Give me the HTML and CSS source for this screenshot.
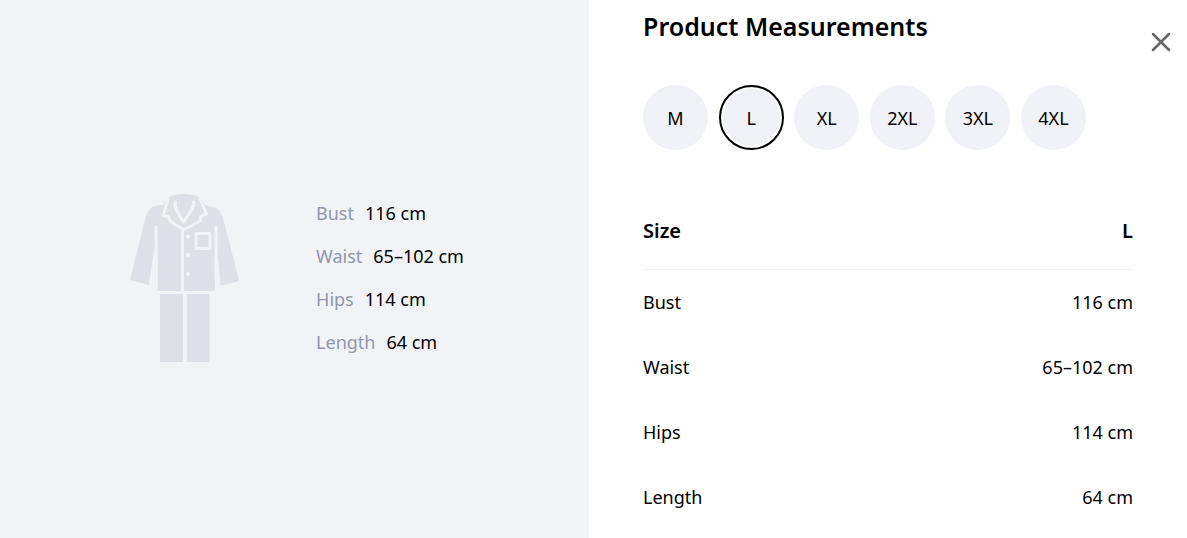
FILE: index.html
```html
<!DOCTYPE html>
<html lang="en">
<head>
<meta charset="utf-8">
<meta name="viewport" content="width=device-width, initial-scale=1">
<title>Product Measurements</title>
<link rel="stylesheet" href="styles.css">
</head>
<body>
<main class="dialog">
  <section class="preview" aria-label="Garment overview">
    <svg class="garment" viewBox="10 8 110 170" aria-hidden="true">
      <g class="garment-fill">
        <path d="M48 13C52 10 57 9 63 9s13 1 18 4l4 7 8 2c5 1 8 5 10 11l16 63-19 5L95 56v50H37.500V56L29 100 10 95 25 35c2-8 5-13 10-14l8-1z"/>
        <path d="M40 109h23v68H40zM67 109h22.500v68H67z"/>
      </g>
      <g class="garment-line">
        <path d="M36 42v52M96 42v52M62.500 46v61"/>
        <path d="M48 15l-5 15.500 5.500 1L50 36l13.500 9L80 36l1-5 5.500-2L80 14"/>
        <path d="M55.500 17c-2 5 3 12 8 20 5-8 12-15 10-20"/>
        <path d="M76 48.500h14v15H76z"/>
      </g>
      <g class="garment-button">
        <circle cx="68" cy="51.500" r="2"/>
        <circle cx="68" cy="70" r="2"/>
        <circle cx="68" cy="89" r="2"/>
      </g>
      <path class="garment-gap" d="M34.500 62v38h-5.500zM97.500 62v39h3zM34.500 90h3v17h-3zM95 90h3v17h-3z"/>
    </svg>
    <dl class="summary">
      <div class="summary-row"><dt>Bust</dt><dd>116 cm</dd></div>
      <div class="summary-row"><dt>Waist</dt><dd>65–102 cm</dd></div>
      <div class="summary-row"><dt>Hips</dt><dd>114 cm</dd></div>
      <div class="summary-row"><dt>Length</dt><dd>64 cm</dd></div>
    </dl>
  </section>
  <section class="details">
    <div class="details-body">
      <h1 class="title">Product Measurements</h1>
      <div class="sizes" role="group" aria-label="Size">
        <button class="size" type="button">M</button>
        <button class="size size-selected" type="button" aria-pressed="true">L</button>
        <button class="size" type="button">XL</button>
        <button class="size" type="button">2XL</button>
        <button class="size" type="button">3XL</button>
        <button class="size" type="button">4XL</button>
      </div>
      <table class="measurements">
        <thead><tr><th scope="col">Size</th><th scope="col">L</th></tr></thead>
        <tbody>
          <tr><td>Bust</td><td>116 cm</td></tr>
          <tr><td>Waist</td><td>65–102 cm</td></tr>
          <tr><td>Hips</td><td>114 cm</td></tr>
          <tr><td>Length</td><td>64 cm</td></tr>
        </tbody>
      </table>
    </div>
    <button class="close" type="button" aria-label="Close">
      <svg class="close-icon" viewBox="0 0 20 20" aria-hidden="true"><path d="M2 2l16 16M18 2L2 18"/></svg>
    </button>
  </section>
</main>
</body>
</html>
```
FILE: styles.css
```css
* { box-sizing: border-box; }
body {
  margin: 0;
  background: #fff;
  color: #000;
  font: 18px/24px "Segoe UI", "Noto Sans", sans-serif;
}
button { font: inherit; color: inherit; border: 0; padding: 0; cursor: pointer; }
.dialog {
  display: grid;
  grid-template-columns: 589fr 598fr;
  min-height: 100vh;
}
.preview {
  display: flex;
  align-items: center;
  justify-content: center;
  gap: 76px;
  padding: 18px 0 0 5px;
  background: #f1f3f7;
}
.garment { width: 110px; height: 170px; flex: none; }
.garment-fill { fill: #dedfe7; }
.garment-line { fill: none; stroke: #f1f3f7; stroke-width: 3; stroke-linecap: round; stroke-linejoin: round; }
.garment-button, .garment-gap { fill: #f1f3f7; }
.summary { margin: 0; }
.summary-row { display: flex; gap: 11px; line-height: 43px; }
.summary dt { color: #9396aa; }
.summary dd { margin: 0; }
.details { display: flex; align-items: flex-start; padding-left: 54px; }
.details-body { flex: 1; }
.title { margin: 0; padding-top: 8px; font-size: 25px; line-height: 36px; font-weight: 600; }
.sizes { display: flex; justify-content: space-between; max-width: 443px; margin-top: 41px; }
.size { width: 65px; height: 65px; border-radius: 50%; background: #f1f2f7; }
.size-selected { border: 2px solid #000; box-shadow: inset 0 0 0 2px #fff; }
.measurements { width: 100%; margin-top: 44px; border-collapse: collapse; }
.measurements th { height: 75px; padding: 0; font-size: 20px; font-weight: 600; text-align: left; border-bottom: 1px solid #eee; }
.measurements td { height: 65px; padding: 0; }
.measurements th:last-child, .measurements td:last-child { text-align: right; }
.close { display: grid; place-items: center; width: 24px; height: 24px; margin: 30px 14px 0 16px; background: none; }
.close-icon { width: 20px; height: 20px; fill: none; stroke: #666; stroke-width: 2.5; stroke-linecap: round; }
```
